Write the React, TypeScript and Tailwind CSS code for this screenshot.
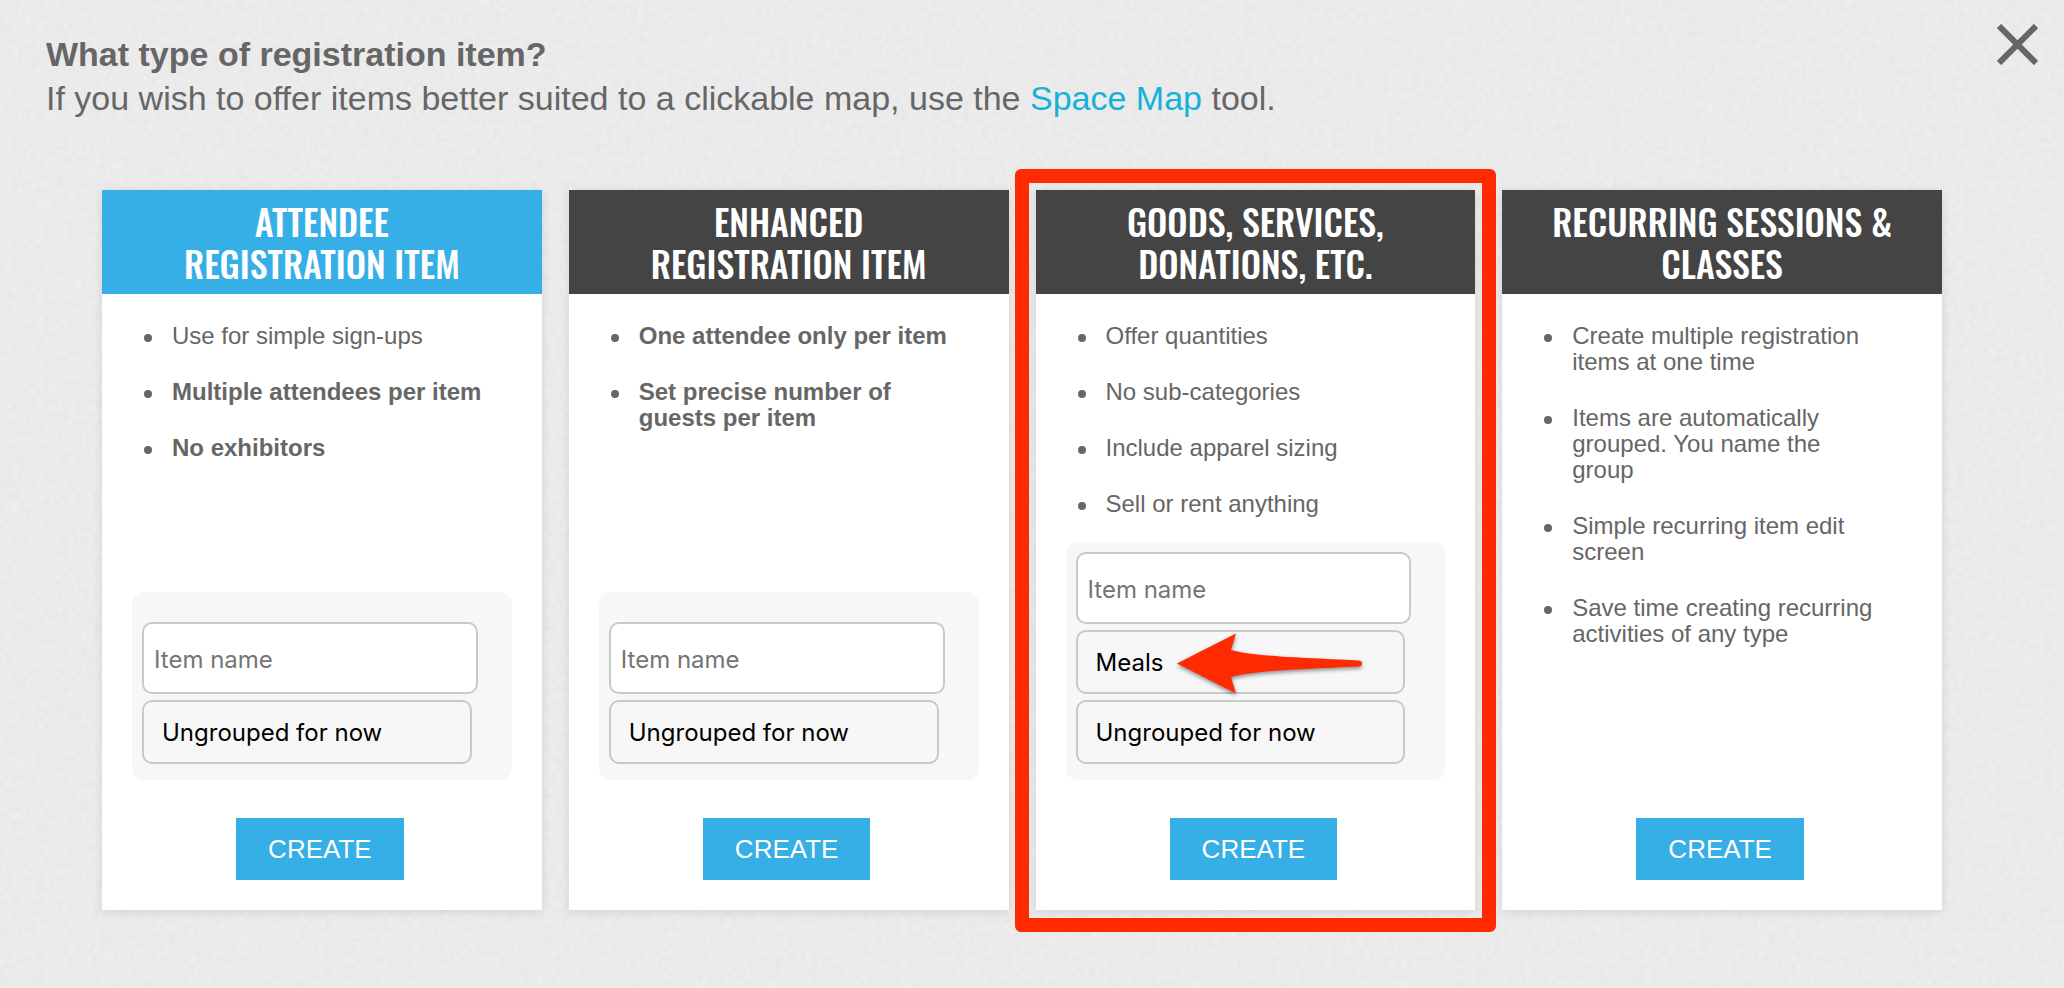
import React from 'react';

type Feature = { text: string; bold?: boolean };

type ItemType = {
  id: string;
  title: string;
  active?: boolean;
  highlighted?: boolean;
  features: Feature[];
  groups: string[];
  hasForm: boolean;
};

const ITEM_TYPES: ItemType[] = [
  {
    id: 'attendee',
    title: 'Attendee\nRegistration Item',
    active: true,
    features: [
      { text: 'Use for simple sign-ups' },
      { text: 'Multiple attendees per item', bold: true },
      { text: 'No exhibitors', bold: true },
    ],
    groups: ['Ungrouped for now'],
    hasForm: true,
  },
  {
    id: 'enhanced',
    title: 'Enhanced\nRegistration Item',
    features: [
      { text: 'One attendee only per item', bold: true },
      { text: 'Set precise number of guests per item', bold: true },
    ],
    groups: ['Ungrouped for now'],
    hasForm: true,
  },
  {
    id: 'goods',
    title: 'Goods, Services,\nDonations, Etc.',
    highlighted: true,
    features: [
      { text: 'Offer quantities' },
      { text: 'No sub-categories' },
      { text: 'Include apparel sizing' },
      { text: 'Sell or rent anything' },
    ],
    groups: ['Meals', 'Ungrouped for now'],
    hasForm: true,
  },
  {
    id: 'recurring',
    title: 'Recurring Sessions &\nClasses',
    features: [
      { text: 'Create multiple registration items at one time' },
      { text: 'Items are automatically grouped. You name the group' },
      { text: 'Simple recurring item edit screen' },
      { text: 'Save time creating recurring activities of any type' },
    ],
    groups: [],
    hasForm: false,
  },
];

function PaperTexture() {
  return (
    <svg className="absolute inset-0 w-full h-full pointer-events-none" aria-hidden="true">
      <filter id="paper" x="0" y="0" width="100%" height="100%" colorInterpolationFilters="sRGB">
        <feTurbulence type="fractalNoise" baseFrequency="0.16" numOctaves="3" seed="4" stitchTiles="stitch" />
        <feColorMatrix
          type="matrix"
          values="0.04 0 0 0 0.9  0.04 0 0 0 0.9  0.04 0 0 0 0.9  0 0 0 0 1"
        />
      </filter>
      <rect width="100%" height="100%" filter="url(#paper)" />
    </svg>
  );
}

function Arrow() {
  return (
    <svg
      className="absolute left-[98px] top-0 w-[192px] h-[68px] pointer-events-none drop-shadow-[0_2px_2px_rgba(0,0,0,0.45)]"
      viewBox="0 0 192 68"
      aria-hidden="true"
    >
      <path
        d="M3 33.500 L62 3.500 L57 20 C78 26 126 28 185 30.500 Q188 31 188 33.500 Q188 36 185 36.500 C126 39 78 41 57 47 L62 63.500 Z"
        fill="#ff2a00"
      />
    </svg>
  );
}

function ItemForm({ item }: { item: ItemType }) {
  return (
    <div
      className={`flex flex-col gap-1.5 rounded-xl bg-[#f7f7f7] pl-2.5 pr-[34px] pb-4 font-[Inter,sans-serif] text-[24px] ${
        item.groups.length > 1 ? 'pt-2.5' : 'pt-[30px]'
      }`}
    >
      <input
        type="text"
        aria-label="Item name"
        placeholder="Item name"
        className="w-full h-[72px] rounded-[10px] border-2 border-[#c9c9c9] bg-white px-2.5 pt-0.5 placeholder:text-[#757575] outline-none"
      />
      {item.groups.map((group) => (
        <div key={group} className="relative mr-1.5">
          <select
            aria-label="Group"
            className="block w-full h-16 appearance-none rounded-[10px] border-2 border-[#c9c9c9] bg-transparent px-[18px] pt-0.5 text-black"
          >
            <option>{group}</option>
          </select>
          {group === 'Meals' && <Arrow />}
        </div>
      ))}
    </div>
  );
}

function ItemCard({ item }: { item: ItemType }) {
  return (
    <section className="relative flex flex-col bg-white shadow-[0_2px_10px_rgba(0,0,0,0.1)]">
      <h2
        className={`py-2.5 text-center uppercase whitespace-pre-line text-white font-medium font-[Oswald,'Liberation_Sans_Narrow','Roboto_Condensed','Liberation_Sans',sans-serif] text-[36px] leading-[42px] ${
          item.active ? 'bg-[#36aee6]' : 'bg-[#444444]'
        }`}
      >
        {item.title}
      </h2>

      <ul className="flex flex-1 flex-col gap-[30px] pt-[29px] pl-[42px] pr-14 text-[24px] leading-[26px] text-[#666666]">
        {item.features.map((feature) => (
          <li key={feature.text} className="flex gap-5">
            <span className="mt-[11px] size-2 shrink-0 rounded-full bg-[#666666]" />
            <span className={feature.bold ? 'font-bold' : ''}>{feature.text}</span>
          </li>
        ))}
      </ul>

      <div className="px-[30px]">{item.hasForm && <ItemForm item={item} />}</div>

      <div className="flex justify-center pt-[38px] pb-[30px] pr-1">
        <button className="h-[62px] bg-[#36aee6] px-8 text-[26px] text-white">CREATE</button>
      </div>

      {item.highlighted && (
        <div className="absolute -inset-x-[21px] -top-[21px] -bottom-[22px] rounded-md border-[14px] border-[#ff2a00] pointer-events-none" />
      )}
    </section>
  );
}

export default function App() {
  return (
    <div className="relative min-h-screen bg-[#eaeaea] font-['Liberation_Sans',Arial,sans-serif]">
      <PaperTexture />
      <main className="relative">
        <header className="flex items-start justify-between pl-[46px] pr-[26px] pt-6">
          <div className="pt-2 text-[34px] leading-[44px] text-[#666666]">
            <h1 className="font-bold">What type of registration item?</h1>
            <p>
              If you wish to offer items better suited to a clickable map, use the{' '}
              <a href="#space-map" className="text-[#14b1d9]">
                Space Map
              </a>{' '}
              tool.
            </p>
          </div>
          <button aria-label="Close">
            <svg className="size-[41px]" viewBox="0 0 41 41" fill="none" aria-hidden="true">
              <path d="M2 2 L39 39 M39 2 L2 39" stroke="#666666" strokeWidth="6" />
            </svg>
          </button>
        </header>

        <div className="grid grid-cols-4 gap-[27px] pt-[70px] pl-[102px] pr-[122px] pb-12">
          {ITEM_TYPES.map((item) => (
            <div key={item.id} className="grid min-h-[720px]">
              <ItemCard item={item} />
            </div>
          ))}
        </div>
      </main>
    </div>
  );
}
